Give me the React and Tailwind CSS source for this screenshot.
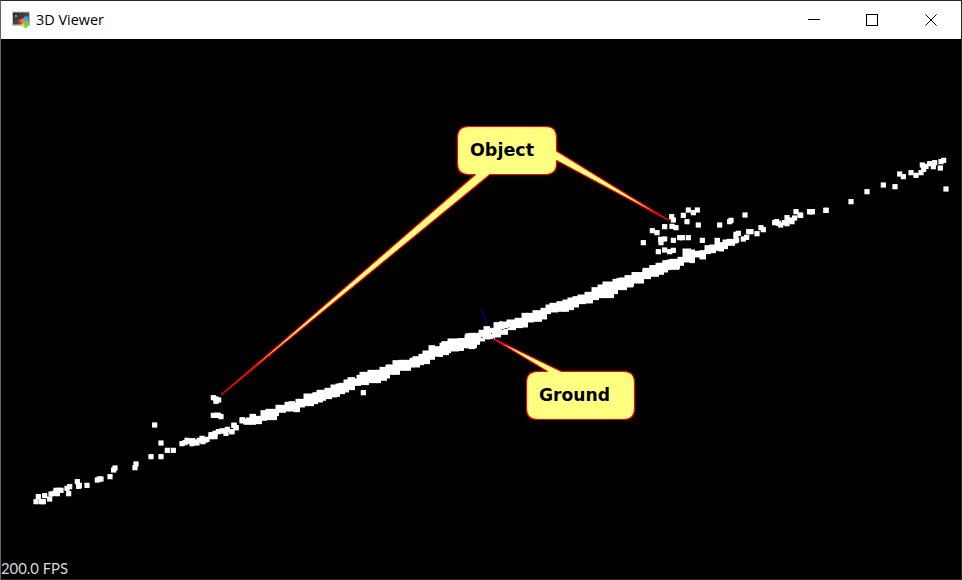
import React from "react";

// Point clusters: [originX, originY, pairs at one third of a pixel].
const CLUSTERS = [
  [20, 380, [48,365,55,350,64,365,70,365,74,347,89,357,93,342,108,331,103,340,112,341,117,331,123,331,141,325,149,320,146,341,172,305,176,319,178,316,201,316,232,300,238,297,243,297,270,290,281,270,285,264,345,263,348,252,393,230,423,230,423,189,404,135,442,211,460,211,580,53,588,64,588,57,596,60,580,106,590,106,596,106,603,110,
    486,191,495,188,501,181,508,184,516,191,518,182,525,186,531,189,538,181,546,175,549,185,556,180,561,178,573,164,573,170,585,160,585,170,595,155,605,153,612,153,618,160,622,148,636,155,642,136,648,143,667,121,678,124,686,120]],
  [230, 320, [5,335,12,316,18,323,400,218]],
  [620, 190, [348,133,350,150,355,130,370,147,380,142,386,125,393,125,411,131,423,113,430,119,464,98,470,95,475,100,482,105,493,98,501,83,501,101,509,90,516,95,524,84,528,65,540,75,569,65,577,65,618,61,
    155,80,160,90,190,76,205,60,220,68,232,60,201,95,235,105,299,105,329,95,333,91,375,75,134,110,156,109,168,113,97,122,111,128,70,158,122,148,134,147,123,158,160,151,179,143,187,143,205,143,247,151,115,185,134,180,149,185,160,181]],
  [800, 140, [2,226,29,215,37,215,78,211,153,185,201,155,250,135,285,140,299,102,310,110,333,98,348,106,363,98,371,88,378,79,367,75,389,71,400,80,404,68,423,65,431,61,421,84,438,147]],
];

// Dense ground line: columns of x, top, bottom, then the closing x.
const BANDS = [
  [230, 320, [30,293,308,42,297,312,59,283,312,74,289,310,92,272,300,107,268,298,138,256,286,145,256,276,165,247,272,178,245,272,192,250,274,198,238,274,207,238,260,222,222,256,245,222,256,248,218,250,262,211,245,275,211,240,285,205,235,303,195,230,318,192,228,328,190,220,341,180,215,355,173,208,372,177,195,380,166,195,390,157,193,413,151,187,440,151,187,450,142,180,467,135,173,476,135,162,490,122,162,507,121,150,525,121,150,540,115,140,550,110,140,566,103,133,580,93,130,598,77,117,613,80,108,637,67,102,653,67,97,660,58,92,685,56,90,700,56,82,708,42,82], 735],
  [440, 290, [75,136,170,88,130,175,103,130,162,118,121,152,133,110,146,147,115,145,163,98,138,180,95,130], 183],
  [440, 290, [0,160,198,7,155,193,23,147,180,60,147,180,65,147,172], 77],
  [230, 320, [708,42,82], 738],
  [470, 240, [75,250,290,90,246,282,112,240,268,135,235,262,157,220,260,172,220,245,190,212,243,212,205,236,228,195,220,240,190,215,260,185,213,278,180,213,295,174,208,310,170,200,325,165,190,345,157,188,365,143,178,383,135,172,400,126,172,430,118,160,440,115,148,467,108,138,490,98,127,520,90,113,540,77,108,565,70,102,580,65,95,590,60,85], 628],
  [620, 190, [0,264,297,15,257,290,35,248,278,70,235,265,90,227,255,107,220,250,130,212,238,150,208,237,175,202,225,190,177,215,210,180,217,223,184,200,240,182,206,255,167,190,270,165,187,285,145,180,297,158,182,308,150,175,320,148,165,343,135,158], 350],
];

const dots = CLUSTERS.flatMap(([ox, oy, p]) =>
  Array.from({ length: p.length / 2 }, (_, i) => [ox + p[2 * i] / 3, oy + p[2 * i + 1] / 3])
);
const columns = BANDS.flatMap(([ox, oy, p, end]) =>
  Array.from({ length: p.length / 3 }, (_, i) => {
    const x = p[3 * i];
    const next = i * 3 + 3 < p.length ? p[3 * i + 3] : end;
    return [Math.round(ox + x / 3) - 0.5, oy + p[3 * i + 1] / 3 - 0.5, Math.round(ox + next / 3) + 1, oy + p[3 * i + 2] / 3 + 0.8];
  })
);

function AppIcon() {
  return (
    <svg width="20" height="20" viewBox="0 0 20 20">
      <defs>
        <linearGradient id="screen" x1="0" y1="0" x2="1" y2="1">
          <stop offset="0" stopColor="#242424" />
          <stop offset="1" stopColor="#666" />
        </linearGradient>
      </defs>
      <rect x="1" y="1.5" width="18" height="14.5" fill="#c4c4c4" />
      <rect x="2" y="2.5" width="16" height="12" fill="url(#screen)" />
      <path d="M4 5l2 1-2 1" stroke="#aaa" fill="none" />
      <path d="M9 9l3 2v4l-3-2-2-2z" fill="#e9412c" />
      <path d="M13 7l3-1 3 4-3 3-3-2z" fill="#4e93e5" />
      <path d="M12 8l2 2-1 4-4-3z" fill="#ff7840" />
      <path d="M12 13l3-3 4 3-4 5.500-3-2z" fill="#63d34b" />
      <path d="M10 14l3-1 1 4-3-1z" fill="#ffc83d" />
    </svg>
  );
}

function TitleBar() {
  return (
    <header className="flex h-[38px] shrink-0 items-center bg-white pr-px pl-[10px] text-black">
      <AppIcon />
      <svg width="80" height="30" className="ml-[5px]">
        <text x="0" y="20" fontFamily="'Open Sans', 'Noto Sans', sans-serif" fontSize="15" textLength="68" lengthAdjust="spacingAndGlyphs">3D Viewer</text>
      </svg>
      <div className="ml-auto flex items-center">
        {["M17 18.5h12", "M17.5 13.5h11v11h-11z", "M17.5 13.5l11 11m0-11l-11 11"].map((d, i) => (
          <svg key={d} width={i === 2 ? 52 : i === 1 ? 59 : 58} height="38" fill="none" stroke="black" strokeWidth="1" shapeRendering={i < 2 ? "crispEdges" : "auto"}>
            <path d={d} />
          </svg>
        ))}
      </div>
    </header>
  );
}

function Scene() {
  return (
    <svg width="960" height="540" viewBox="1 39 960 540" className="block bg-black">
      <g fill="white">
        {columns.map(([x, y, x2, y2], i) => <rect key={i} x={x} y={y} width={x2 - x} height={y2 - y} />)}
        {dots.map(([x, y], i) => <rect key={i} x={x - 2.6} y={y - 2.6} width="5.2" height="5.2" />)}
      </g>
      <path d="M481.5 309.5L487 325" stroke="#0000c8" strokeWidth="1.4" strokeDasharray="3 1" />
      <path d="M501.500 329.500h2m1-1h3m1-1h1M491 333.500h1" stroke="#d92020" fill="none" />
      <path d="M481 337.500h1.500" stroke="#206020" />
      <g fill="#ffff80" stroke="#f00" strokeWidth="1.1" strokeLinejoin="bevel">
        <path d="M468.500 126.500H546Q556.500 126.500 556.500 137.500V151L669 220.500L556.500 160.500V164Q556.500 174.500 546 174.500H490L221 395L475.500 174.500H468.500Q457.500 174.500 457.500 163.500V137.500Q457.500 126.500 468.500 126.500Z" />
        <path d="M537.500 371.500H547.500L493 338.500L561.500 371.500H624Q634.500 371.500 634.500 382.500V408.500Q634.500 419.500 624 419.500H537.500Q526.500 419.500 526.500 408.500V382.500Q526.500 371.500 537.500 371.500Z" />
      </g>
      <g fontFamily="'DejaVu Sans', sans-serif" fontWeight="700" fontSize="17.5" fill="black">
        <text x="470" y="156" textLength="64" lengthAdjust="spacingAndGlyphs">Object</text>
        <text x="539" y="401" textLength="71" lengthAdjust="spacingAndGlyphs">Ground</text>
      </g>
      <text x="1" y="574" fontFamily="Lato, sans-serif" fontSize="15" fill="#d8d8d8" textLength="67" lengthAdjust="spacingAndGlyphs">200.0 FPS</text>
    </svg>
  );
}

export default function App() {
  return (
    <main className="flex h-[580px] w-[962px] flex-col overflow-hidden border border-[#28282c] border-l-[#656565] bg-black">
      <TitleBar />
      <Scene />
    </main>
  );
}
